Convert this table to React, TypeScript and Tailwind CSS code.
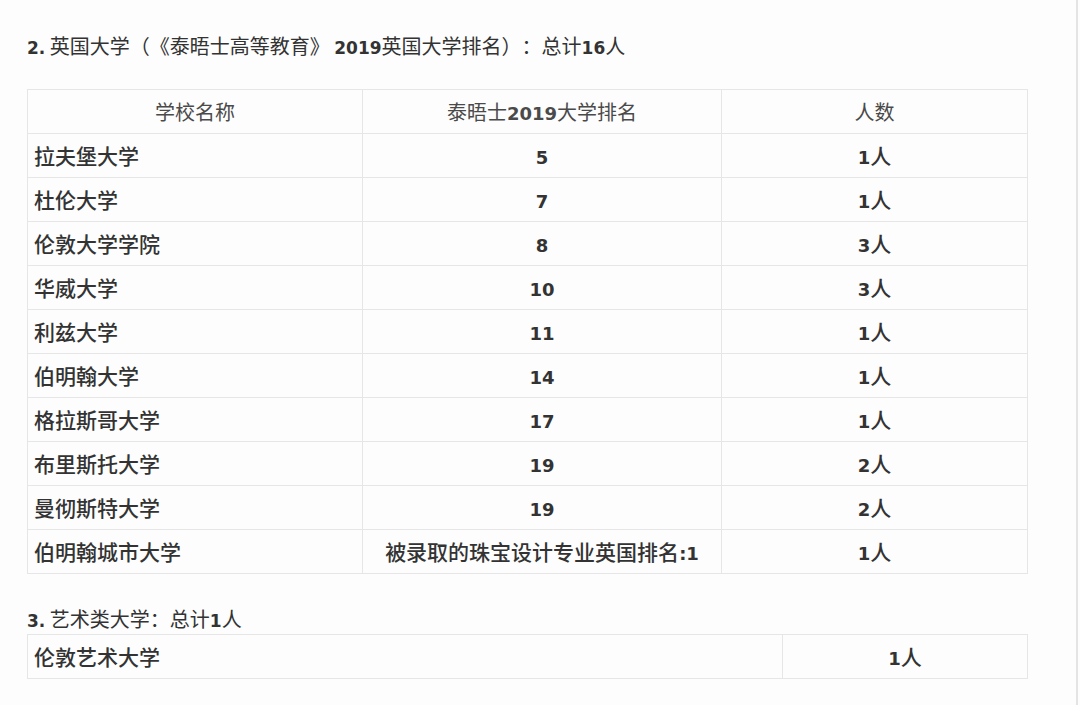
import React from 'react';

interface Row {
  school: string;
  rank: React.ReactNode;
  count: string;
}

const cjk = "font-['Noto_Sans_CJK_SC',sans-serif] [text-spacing-trim:space-all]";
const num = "font-['DejaVu_Sans','Noto_Sans_CJK_SC',sans-serif] font-bold";

const N = ({ children, size = 'text-[18px]' }: { children: React.ReactNode; size?: string }) => (
  <span className={`${num} ${size}`}>{children}</span>
);

const rows: Row[] = [
  { school: '拉夫堡大学', rank: '5', count: '1' },
  { school: '杜伦大学', rank: '7', count: '1' },
  { school: '伦敦大学学院', rank: '8', count: '3' },
  { school: '华威大学', rank: '10', count: '3' },
  { school: '利兹大学', rank: '11', count: '1' },
  { school: '伯明翰大学', rank: '14', count: '1' },
  { school: '格拉斯哥大学', rank: '17', count: '1' },
  { school: '布里斯托大学', rank: '19', count: '2' },
  { school: '曼彻斯特大学', rank: '19', count: '2' },
  {
    school: '伯明翰城市大学',
    rank: (
      <span className="font-medium">
        被录取的珠宝设计专业英国排名<N>:1</N>
      </span>
    ),
    count: '1',
  },
];

const cell = 'border border-[#e6e6e6] h-[44px] p-0';

const App = () => {
  return (
    <div className={`w-[1080px] h-[705px] bg-[#fdfdfd] overflow-hidden text-[#333] ${cjk}`}>
      <div className="w-[1078px] h-full border-r-2 border-[#e4e4e4] pl-[27px] pt-[32px]">
        <h2 className="h-[28px] leading-[28px] text-[20px] font-normal text-[#333] whitespace-nowrap">
          <N size="text-[17px]">2.</N> 英国大学（《泰晤士高等教育》 <N size="text-[17px]">2019</N>英国大学排名）：总计<N size="text-[17px]">16</N>人
        </h2>

        <table className="mt-[29px] w-[1000px] border-collapse table-fixed">
          <colgroup>
            <col className="w-[335px]" />
            <col className="w-[359px]" />
            <col className="w-[306px]" />
          </colgroup>
          <thead>
            <tr className="text-[20px] text-[#4a4a4a]">
              <th className={`${cell} font-normal text-center`}>学校名称</th>
              <th className={`${cell} font-normal text-center`}>
                泰晤士<N>2019</N>大学排名
              </th>
              <th className={`${cell} font-normal text-center`}>人数</th>
            </tr>
          </thead>
          <tbody>
            {rows.map((r, i) => (
              <tr key={i} className="text-[21px]">
                <td className={`${cell} pl-[6px] text-left font-medium`}>{r.school}</td>
                <td className={`${cell} text-center`}>
                  {typeof r.rank === 'string' ? <N>{r.rank}</N> : r.rank}
                </td>
                <td className={`${cell} text-center font-medium`}>
                  <N>{r.count}</N>人
                </td>
              </tr>
            ))}
          </tbody>
        </table>

        <h2 className="mt-[31px] h-[28px] leading-[28px] text-[20px] font-normal text-[#333] whitespace-nowrap">
          <N size="text-[17px]">3.</N> 艺术类大学：总计<N size="text-[17px]">1</N>人
        </h2>

        <table className="mt-px w-[1000px] border-collapse table-fixed">
          <colgroup>
            <col className="w-[755px]" />
            <col className="w-[245px]" />
          </colgroup>
          <tbody>
            <tr className="text-[21px]">
              <td className={`${cell} pl-[6px] text-left font-medium`}>伦敦艺术大学</td>
              <td className={`${cell} text-center font-medium`}>
                <N>1</N>人
              </td>
            </tr>
          </tbody>
        </table>
      </div>
    </div>
  );
};

export default App;
